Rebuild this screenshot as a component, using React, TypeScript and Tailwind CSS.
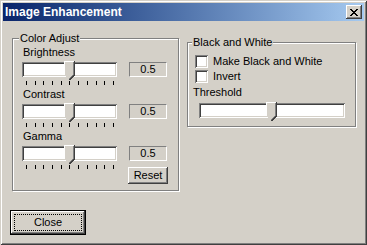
const raised =
  "shadow-[inset_-1px_-1px_#404040,inset_1px_1px_#ffffff,inset_-2px_-2px_#808080,inset_2px_2px_#d4d0c8]";
const sunken =
  "shadow-[inset_1px_1px_#808080,inset_-1px_-1px_#ffffff,inset_2px_2px_#404040,inset_-2px_-2px_#d4d0c8]";
const etched = "border border-[#808080] shadow-[inset_1px_1px_#ffffff,1px_1px_#ffffff]";

function Thumb({ left }: { left: number }) {
  return (
    <svg
      width="11"
      height="19"
      viewBox="0 0 11 19"
      className="absolute top-[-1px]"
      style={{ left }}
      shapeRendering="crispEdges"
    >
      <polygon points="0,0 11,0 11,14 5.5,19 0,14" fill="#d4d0c8" />
      <polyline points="0.5,14 0.5,0.5 10,0.5" fill="none" stroke="#ffffff" />
      <polyline points="9.5,1 9.5,14 5.5,18" fill="none" stroke="#808080" />
      <polyline points="10.5,0 10.5,14.2 5.5,19" fill="none" stroke="#404040" />
    </svg>
  );
}

function Track({ width, thumb }: { width: number; thumb: number }) {
  return (
    <div className={`relative h-[15px] bg-white ${sunken}`} style={{ width }}>
      <Thumb left={thumb} />
    </div>
  );
}

function Ticks() {
  return (
    <div className="flex w-[88px] justify-between ml-[4px]">
      {Array.from({ length: 11 }).map((_, i) => (
        <div key={i} className="w-px h-[4px] bg-black" />
      ))}
    </div>
  );
}

function ValueBox() {
  return (
    <div className="ml-[12px] w-[38px] h-[15px] border border-t-[#808080] border-l-[#808080] border-b-white border-r-white flex items-center justify-center leading-none">
      0.5
    </div>
  );
}

function SliderBlock({ label, reset }: { label: string; reset?: boolean }) {
  return (
    <div className="flex flex-col h-[42px]">
      <div className="h-[14px] leading-[14px] ml-[1px]">{label}</div>
      <div className="flex mt-[3px]">
        <Track width={95} thumb={42} />
        <ValueBox />
      </div>
      <div className="flex items-start mt-[4px]">
        <Ticks />
        {reset && (
          <button
            className={`ml-[14px] mt-[2px] w-[40px] h-[17px] bg-[#d4d0c8] ${raised} flex items-center justify-center leading-none`}
          >
            Reset
          </button>
        )}
      </div>
    </div>
  );
}

function Checkbox({ label }: { label: string }) {
  return (
    <div className="flex items-start h-[15px] ml-[2px]">
      <div className={`w-[13px] h-[13px] bg-white ${sunken}`} />
      <span className="ml-[5px] leading-[13px]">{label}</span>
    </div>
  );
}

export default function App() {
  return (
    <div
      className={`w-[367px] h-[245px] p-[3px] bg-[#d4d0c8] text-black text-[11px] font-['Liberation_Sans',Arial,sans-serif] shadow-[inset_1px_1px_#d4d0c8,inset_-1px_-1px_#404040,inset_2px_2px_#ffffff,inset_-2px_-2px_#808080]`}
    >
      {/* title bar */}
      <div className="h-[18px] flex items-center justify-between bg-gradient-to-r from-[#0a246a] to-[#a6caf0] pl-[2px] pr-[2px]">
        <span className="text-white font-bold text-[12px] leading-none">Image Enhancement</span>
        <div className={`w-[16px] h-[14px] bg-[#d4d0c8] ${raised} flex items-center justify-center`}>
          <svg width="8" height="7" viewBox="0 0 8 7" shapeRendering="crispEdges">
            <path d="M0 0h2v1h-2zM6 0h2v1h-2zM1 1h2v1h-2zM5 1h2v1h-2zM2 2h4v1h-4zM3 3h2v1h-2zM2 4h4v1h-4zM1 5h2v1h-2zM5 5h2v1h-2zM0 6h2v1h-2zM6 6h2v1h-2z" fill="#000" />
          </svg>
        </div>
      </div>

      {/* body */}
      <div className="flex flex-col pl-[7px] pt-[17px]">
        <div className="flex items-start ml-[2px]">
          <div className={`relative w-[167px] h-[153px] ${etched} pt-[6px] pl-[9px]`}>
            <span className="absolute left-[6px] top-[-7px] px-px bg-[#d4d0c8] leading-[13px]">Color Adjust</span>
            <SliderBlock label="Brightness" />
            <SliderBlock label="Contrast" />
            <SliderBlock label="Gamma" reset />
          </div>

          <div className={`relative ml-[8px] mt-[4px] w-[169px] h-[85px] ${etched} pt-[12px] pl-[5px]`}>
            <span className="absolute left-[4px] top-[-7px] px-px bg-[#d4d0c8] leading-[13px]">Black and White</span>
            <Checkbox label="Make Black and White" />
            <Checkbox label="Invert" />
            <div className="h-[14px] leading-[14px]">Threshold</div>
            <div className="mt-[4px] ml-[6px]">
              <Track width={146} thumb={67} />
            </div>
          </div>
        </div>

        <button className="mt-[19px] w-[76px] h-[25px] border border-black bg-[#d4d0c8] shadow-[inset_-1px_-1px_#404040,inset_1px_1px_#ffffff,inset_-2px_-2px_#808080,inset_2px_2px_#d4d0c8] relative flex items-center justify-center leading-none">
          <span className="absolute inset-[3px] border border-dotted border-black" />
          Close
        </button>
      </div>
    </div>
  );
}
